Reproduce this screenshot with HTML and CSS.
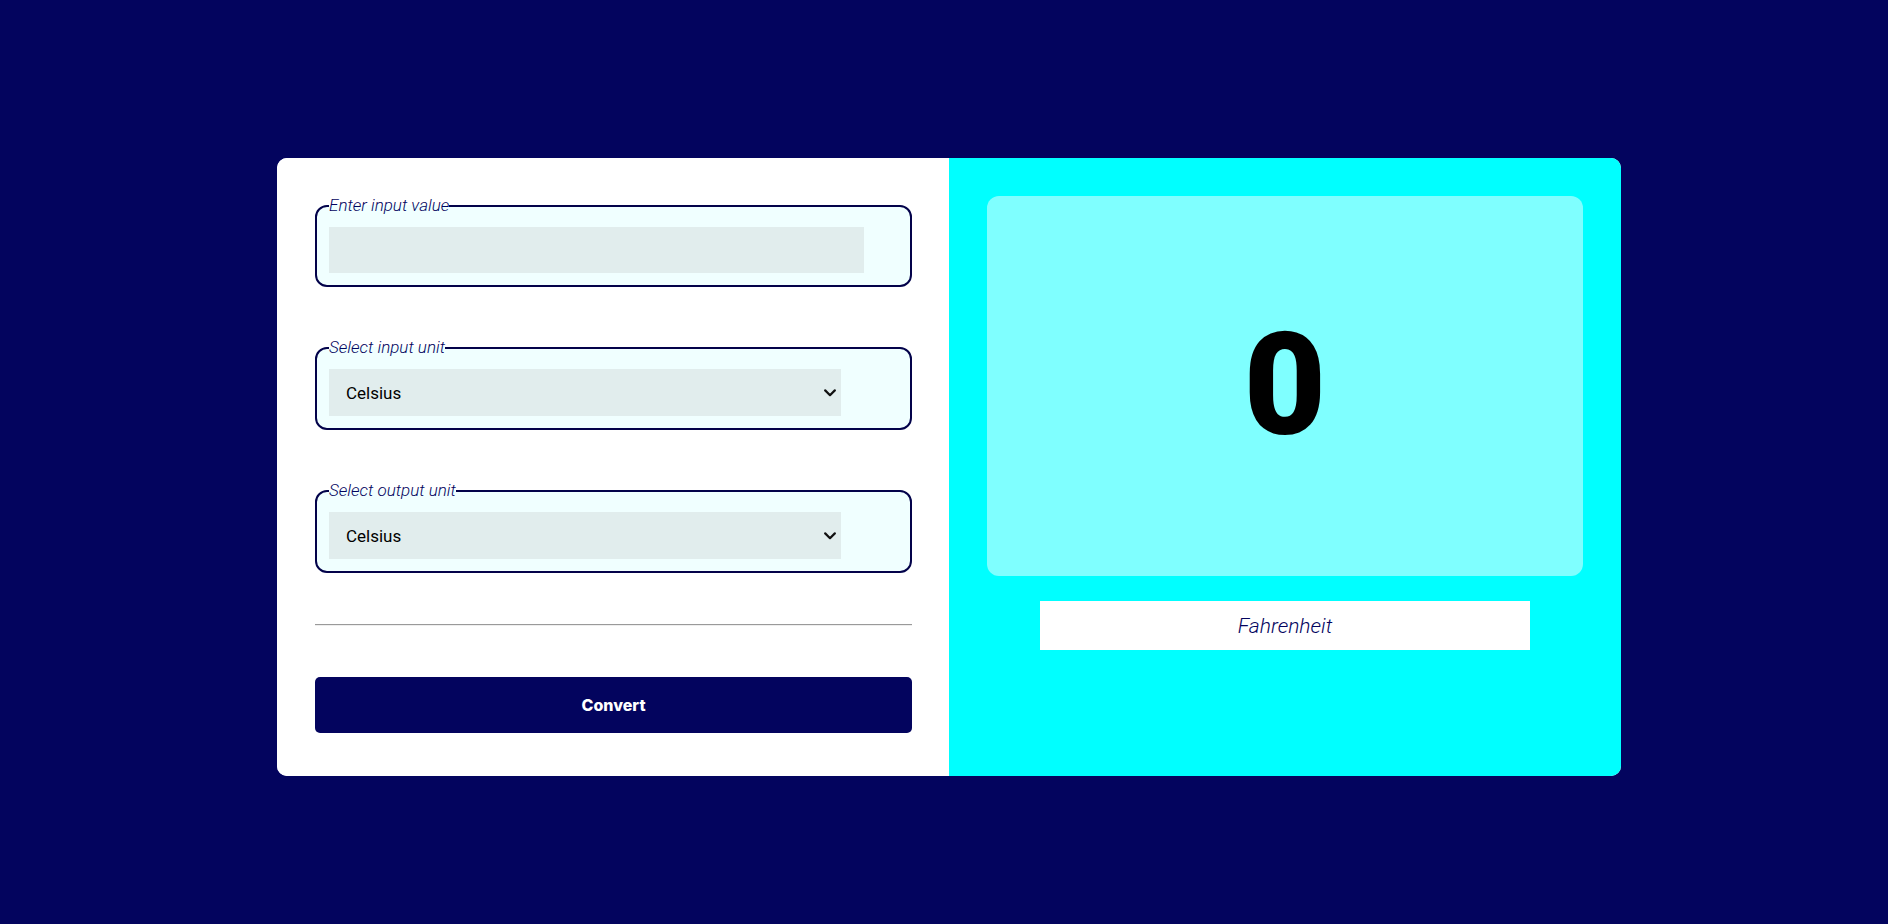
FILE: index.html
```html
<!DOCTYPE html>
<html lang="en">
<head>
<meta charset="utf-8">
<title>Temperature Converter</title>
<link rel="stylesheet" href="styles.css">
</head>
<body>
<div class="page">
  <main class="card">
    <section class="form-panel">
      <fieldset class="field">
        <legend class="field-label">Enter input value</legend>
        <input class="field-input" type="text">
      </fieldset>
      <fieldset class="field">
        <legend class="field-label">Select input unit</legend>
        <div class="select-wrap">
          <select class="field-select">
            <option>Celsius</option>
            <option>Fahrenheit</option>
            <option>Kelvin</option>
          </select>
          <svg class="chevron" width="12" height="8" viewBox="0 0 12 8" aria-hidden="true"><path d="M1.2 1.4 L6 6.2 L10.8 1.4" fill="none" stroke="#111" stroke-width="2.2" stroke-linecap="round" stroke-linejoin="round"/></svg>
        </div>
      </fieldset>
      <fieldset class="field">
        <legend class="field-label">Select output unit</legend>
        <div class="select-wrap">
          <select class="field-select">
            <option>Celsius</option>
            <option>Fahrenheit</option>
            <option>Kelvin</option>
          </select>
          <svg class="chevron" width="12" height="8" viewBox="0 0 12 8" aria-hidden="true"><path d="M1.2 1.4 L6 6.2 L10.8 1.4" fill="none" stroke="#111" stroke-width="2.2" stroke-linecap="round" stroke-linejoin="round"/></svg>
        </div>
      </fieldset>
      <hr class="divider">
      <button class="convert-btn" type="button">Convert</button>
    </section>
    <section class="result-panel">
      <div class="result-box">
        <span class="result-value">0</span>
      </div>
      <div class="result-unit">Fahrenheit</div>
    </section>
  </main>
</div>
</body>
</html>
```
FILE: styles.css
```css
html, body {
  margin: 0;
  padding: 0;
}

body {
  background: #03045e;
  font-family: Roboto, "Liberation Sans", sans-serif;
  min-height: 924px;
}

.page {
  padding: 158px 0 0 277px;
}

.card {
  width: 1344px;
  display: grid;
  grid-template-columns: 672px 672px;
  border-radius: 10px;
  overflow: hidden;
  background: #ffffff;
}

.form-panel {
  display: flex;
  flex-direction: column;
  gap: 51px;
  padding: 38px 37px 43px 38px;
  background: #ffffff;
}

.field {
  margin: 0;
  padding: 12px;
  border: 2px solid #03024a;
  border-radius: 12px;
  background: #f0ffff;
  min-width: 0;
}

.field-label {
  padding: 0;
  font-family: Roboto, sans-serif;
  font-weight: 300;
  font-style: italic;
  font-size: 17px;
  line-height: 19px;
  color: #03045e;
}

.field-input {
  display: block;
  box-sizing: border-box;
  width: 94%;
  height: 46px;
  margin: 0;
  border: none;
  outline: none;
  background: #e1eded;
  padding: 0 12px;
  font-family: Roboto, sans-serif;
  font-size: 17px;
}

.select-wrap {
  position: relative;
  width: 90%;
}

.field-select {
  display: block;
  box-sizing: border-box;
  width: 100%;
  height: 47px;
  margin: 0;
  border: none;
  outline: none;
  -webkit-appearance: none;
  appearance: none;
  background-color: #e1eded;
  padding: 0 30px 0 17px;
  font-family: Roboto, sans-serif;
  font-size: 17px;
  color: #000000;
  border-radius: 0;
}

.chevron {
  position: absolute;
  right: 5px;
  top: 20px;
  pointer-events: none;
}

.divider {
  margin: 0;
  border: none;
  border-top: 1px solid #9a9a9a;
  border-bottom: 1px solid #eeeeee;
  height: 0;
}

.convert-btn {
  height: 56px;
  border: none;
  border-radius: 5px;
  background: #03045e;
  color: #ffffff;
  font-family: Inter, Roboto, sans-serif;
  font-weight: 800;
  font-size: 16px;
  cursor: pointer;
}

.result-panel {
  background: #00ffff;
  padding: 38px 38px 0 38px;
  display: flex;
  flex-direction: column;
  align-items: center;
  gap: 25px;
}

.result-box {
  align-self: stretch;
  height: 380px;
  border-radius: 12px;
  background: #7fffff;
  display: flex;
  align-items: center;
  justify-content: center;
}

.result-value {
  font-family: Roboto, Inter, sans-serif;
  font-weight: 900;
  font-size: 142px;
  line-height: 1;
  color: #000000;
}

.result-unit {
  width: 490px;
  height: 49px;
  background: #ffffff;
  display: flex;
  align-items: center;
  justify-content: center;
  font-family: Roboto, sans-serif;
  font-weight: 300;
  font-style: italic;
  font-size: 21px;
  color: #03045e;
}
```
